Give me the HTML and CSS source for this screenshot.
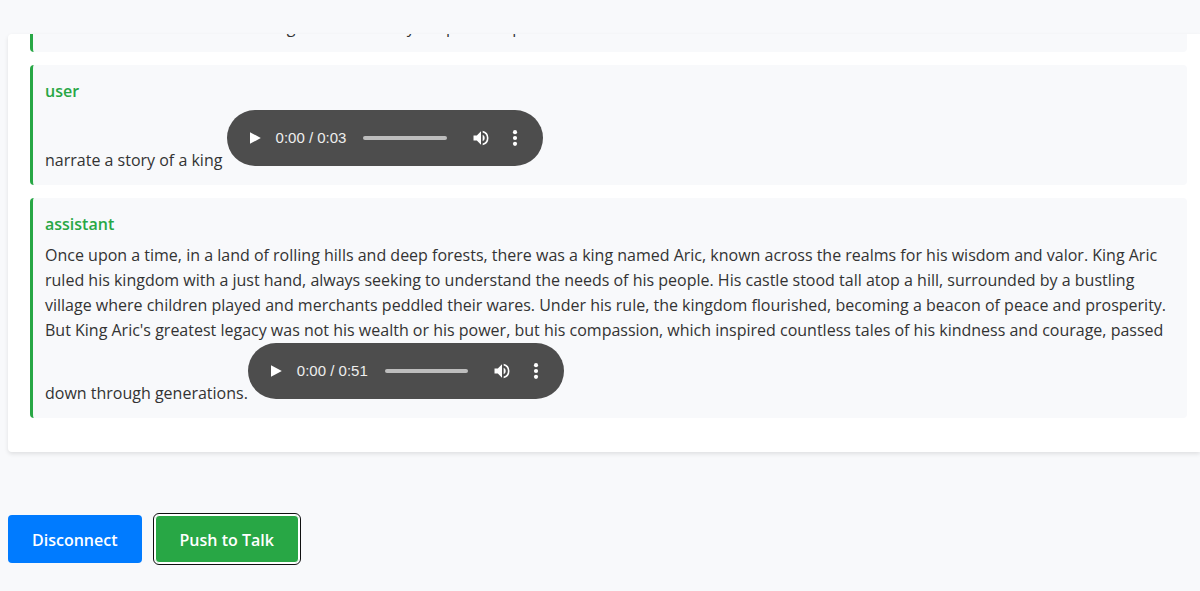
FILE: index.html
```html
<!DOCTYPE html>
<html lang="en">
<head>
<meta charset="utf-8">
<title>Voice chat</title>
<link rel="stylesheet" href="styles.css">
</head>
<body>
<svg class="sprite" aria-hidden="true">
  <symbol id="play" viewBox="0 0 24 24"><path d="M6 5v14l13-7z"/></symbol>
  <symbol id="volume" viewBox="0 0 24 24"><path d="M3 9v6h4l5 5V4L7 9H3zm13.5 3A4.5 4.5 0 0 0 14 7.97v8.05A4.5 4.5 0 0 0 16.5 12zM14 3.23v2.06a7 7 0 0 1 0 13.42v2.06a9 9 0 0 0 0-17.54z"/></symbol>
  <symbol id="more" viewBox="0 0 24 24"><circle cx="12" cy="5" r="2.5"/><circle cx="12" cy="12" r="2.5"/><circle cx="12" cy="19" r="2.5"/></symbol>
</svg>
<main class="chat">
  <section class="message">
    <p class="text">Hello there! I am an assistant so glad to recite any recipe or a tip</p>
  </section>
  <section class="message">
    <h2 class="role">user</h2>
    <p class="text">narrate a story of a king <span class="player"><span class="controls">
      <button class="icon-button" aria-label="Play"><svg><use href="#play"/></svg></button>
      <span class="time">0:00 / 0:03</span>
      <input class="seek" type="range" min="0" max="3" value="0" aria-label="Seek">
      <button class="icon-button" aria-label="Mute"><svg><use href="#volume"/></svg></button>
      <button class="icon-button" aria-label="More options"><svg><use href="#more"/></svg></button>
    </span></span></p>
  </section>
  <section class="message">
    <h2 class="role">assistant</h2>
    <p class="text">Once upon a time, in a land of rolling hills and deep forests, there was a king named Aric, known across the realms for his wisdom and valor. King Aric<br>
    ruled his kingdom with a just hand, always seeking to understand the needs of his people. His castle stood tall atop a hill, surrounded by a bustling<br>
    village where children played and merchants peddled their wares. Under his rule, the kingdom flourished, becoming a beacon of peace and prosperity.<br>
    But King Aric's greatest legacy was not his wealth or his power, but his compassion, which inspired countless tales of his kindness and courage, passed<br>
    down through generations.<span class="player"><span class="controls">
      <button class="icon-button" aria-label="Play"><svg><use href="#play"/></svg></button>
      <span class="time">0:00 / 0:51</span>
      <input class="seek" type="range" min="0" max="51" value="0" aria-label="Seek">
      <button class="icon-button" aria-label="Mute"><svg><use href="#volume"/></svg></button>
      <button class="icon-button" aria-label="More options"><svg><use href="#more"/></svg></button>
    </span></span></p>
  </section>
</main>
<div class="actions">
  <button class="button">Disconnect</button>
  <button class="button talk">Push to Talk</button>
</div>
</body>
</html>
```
FILE: styles.css
```css
* { box-sizing: border-box; }
body {
  margin: 0;
  min-height: 100vh;
  padding: 34px 0 28px 8px;
  display: flex;
  flex-direction: column;
  background: #f8f9fb;
  color: #333;
  font: 16px/25px "Segoe UI", "Open Sans", sans-serif;
  overflow: hidden;
}
.sprite { display: none; }
.chat {
  flex: 1;
  min-height: 0;
  max-height: 418px;
  display: flex;
  flex-direction: column;
  justify-content: flex-end;
  gap: 13px;
  padding: 0 13px 34px 22px;
  overflow: hidden;
  background: #fff;
  border-radius: 4px 0 0 4px;
  box-shadow: 0 2px 4px rgba(0, 0, 0, .1);
}
.message {
  flex: none;
  padding: 14px 12px 12px;
  border-left: 3px solid #28a745;
  border-radius: 4px;
  background: #f8f9fb;
}
.role {
  margin: 0 0 6px;
  font-size: 16px;
  font-weight: 600;
  color: #28a745;
}
.text { margin: 0; white-space: nowrap; }
.player {
  display: inline-block;
  width: 316px;
  overflow: hidden;
  border-radius: 28px;
  background: #4d4d4d;
}
.controls {
  height: 56px;
  display: flex;
  align-items: center;
  padding: 0 11px;
  color: #fff;
}
.icon-button {
  flex: none;
  width: 34px;
  height: 34px;
  padding: 0;
  border: 0;
  background: none;
  color: inherit;
}
.icon-button svg {
  display: block;
  width: 20px;
  height: 20px;
  margin: auto;
  fill: currentColor;
}
.time {
  margin: 0 17px 0 4px;
  font: 15px/20px "Liberation Sans", Arial, sans-serif;
  color: #eee;
}
.seek {
  appearance: none;
  flex: 1;
  min-width: 0;
  height: 4px;
  margin: 0 17px 0 0;
  border-radius: 2px;
  background: #bdbdbd;
}
.seek::-webkit-slider-thumb { appearance: none; width: 0; height: 0; }
.actions {
  display: flex;
  gap: 13px;
  margin-top: 63px;
}
.button {
  height: 48px;
  padding: 2px 24px 0;
  border: 0;
  border-radius: 4px;
  background: #007bff;
  color: #fff;
  font: inherit;
  font-weight: 600;
}
.talk {
  border: 1px solid #fff;
  background: #28a745;
  box-shadow: 0 0 0 1px #fff;
  outline: 1px solid #101010;
  outline-offset: 1px;
}
```
